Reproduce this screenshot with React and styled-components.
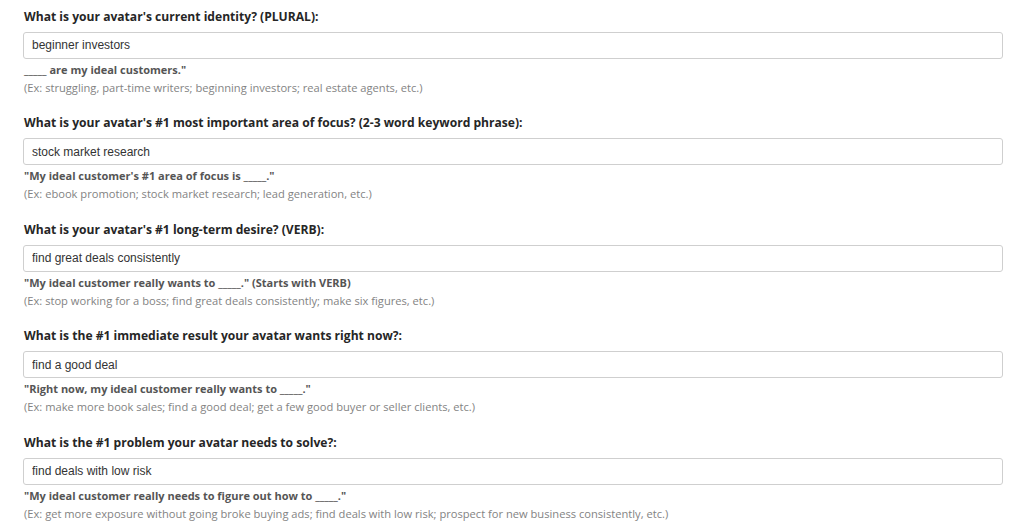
import React from 'react'
import styled, { createGlobalStyle } from 'styled-components'

const GlobalStyle = createGlobalStyle`
body {
   margin: 0;
   background: #ffffff;
   font-family: 'Open Sans', 'Liberation Sans', sans-serif;
}
`

const Form = styled.div`
box-sizing: border-box;
width: 100%;
padding: 7.5px 21px 0 23px;
display: flex;
flex-direction: column;
`

const Field = styled.div`
display: flex;
flex-direction: column;
padding-bottom: 19.5px;
`

const Question = styled.label`
font-family: 'Open Sans', sans-serif;
font-size: 12.1px;
font-weight: 700;
line-height: 18px;
color: #262626;
padding-left: 1px;
margin-bottom: 6px;
`

const Answer = styled.input`
box-sizing: border-box;
width: 100%;
height: 27px;
padding: 0 8px;
border: 1px solid #cfcfcf;
border-radius: 3px;
background: #fff;
font-family: 'Liberation Sans', Arial, sans-serif;
font-size: 12px;
color: #333;
outline: none;
`

const Prompt = styled.div`
font-family: 'Open Sans', sans-serif;
font-size: 11px;
font-weight: 700;
line-height: 14px;
color: #555;
margin-top: 4px;
padding-left: 1px;
`

const Examples = styled.div`
font-family: 'Open Sans', sans-serif;
font-size: 11.15px;
line-height: 14px;
color: #838383;
margin-top: 4px;
padding-left: 1px;
`

const fields = [
   {
      question: "What is your avatar's current identity? (PLURAL):",
      answer: 'beginner investors',
      prompt: '_____ are my ideal customers."',
      examples: '(Ex: struggling, part-time writers; beginning investors; real estate agents, etc.)'
   },
   {
      question: "What is your avatar's #1 most important area of focus? (2-3 word keyword phrase):",
      answer: 'stock market research',
      prompt: '"My ideal customer\'s #1 area of focus is _____."',
      examples: '(Ex: ebook promotion; stock market research; lead generation, etc.)'
   },
   {
      question: "What is your avatar's #1 long-term desire? (VERB):",
      answer: 'find great deals consistently',
      prompt: '"My ideal customer really wants to _____." (Starts with VERB)',
      examples: '(Ex: stop working for a boss; find great deals consistently; make six figures, etc.)'
   },
   {
      question: 'What is the #1 immediate result your avatar wants right now?:',
      answer: 'find a good deal',
      prompt: '"Right now, my ideal customer really wants to _____."',
      examples: '(Ex: make more book sales; find a good deal; get a few good buyer or seller clients, etc.)'
   },
   {
      question: 'What is the #1 problem your avatar needs to solve?:',
      answer: 'find deals with low risk',
      prompt: '"My ideal customer really needs to figure out how to _____."',
      examples: '(Ex: get more exposure without going broke buying ads; find deals with low risk; prospect for new business consistently, etc.)'
   }
]

const App = () => {
  return (
   <>
      <GlobalStyle />
      <Form>
         {fields.map(f => (
            <Field key={f.question}>
               <Question>{f.question}</Question>
               <Answer type="text" value={f.answer} readOnly />
               <Prompt>{f.prompt}</Prompt>
               <Examples>{f.examples}</Examples>
            </Field>
         ))}
      </Form>
   </>
  )
}

export default App
